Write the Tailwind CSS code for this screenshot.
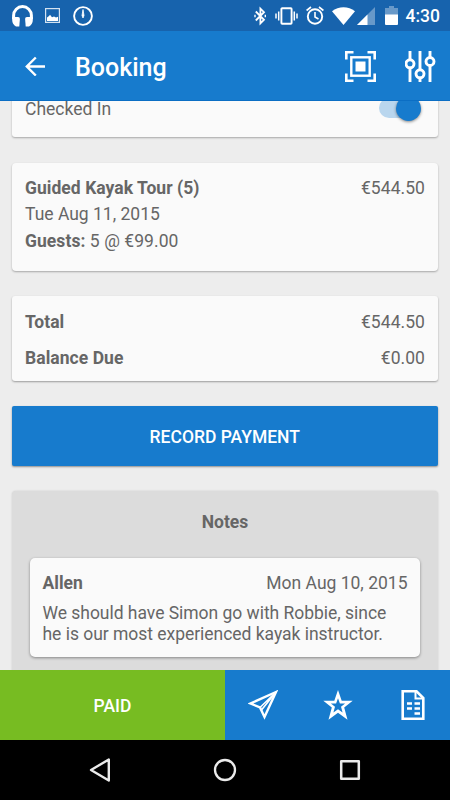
<!DOCTYPE html>
<html lang="en">
<head>
    <meta charset="UTF-8">
    <meta name="viewport" content="width=device-width, initial-scale=1.0">
    <title>Booking</title>
    <script src="https://cdn.jsdelivr.net/npm/@tailwindcss/browser@4"></script>
</head>
<body class="bg-[#ededed] font-['Roboto',sans-serif] text-[17.5px] text-[#666666]">
    <div class="w-[450px] h-[800px] flex flex-col overflow-hidden">

        <!-- Status bar -->
        <div class="h-[31px] shrink-0 bg-[#1763ad] flex items-center text-white pl-3 pr-[10px]">
            <svg class="w-[22px] h-[22px]" viewBox="0 0 22 22" fill="currentColor">
                <path d="M1.600 14V10.500a8.900 8.900 0 0 1 17.800 0V14" fill="none" stroke="currentColor" stroke-width="3"/>
                <path d="M.2 12h5.800q2 0 1.900 2l-.6 7.500H4Q.2 19 .2 15z"/>
                <path d="M20.800 12h-5.800q-2 0-1.900 2l.6 7.500H17q3.800-2.500 3.800-6.500z"/>
            </svg>
            <svg class="w-[15px] h-[15px] ml-[11px]" viewBox="0 0 15 15">
                <rect x=".6" y=".6" width="13.800" height="13.800" fill="none" stroke="#d3e2f1" stroke-width="1.200"/>
                <path d="M2 13V9.500l2-1.500 1-1.200 2 2.400 2-.8 2 1 2-.6V13z" fill="currentColor"/>
            </svg>
            <svg class="w-[20px] h-[20px] ml-[12.5px]" viewBox="0 0 20 20">
                <circle cx="10" cy="10" r="8.900" fill="none" stroke="currentColor" stroke-width="1.900"/>
                <path d="M10 3.500l1 6L10 12 9 9.500z" fill="currentColor" stroke="currentColor" stroke-width=".8"/>
            </svg>

            <div class="ml-auto flex items-center">
                <svg class="w-[13px] h-[20px]" viewBox="0 0 13 20" fill="none" stroke="currentColor" stroke-width="1.800">
                    <path d="M1.800 5.500l8.200 8.300-3.600 3.600V2.600L10 6.200l-8.200 8.300"/>
                    <path d="M11.300 8.800v2.400M1 8.800v2.400" stroke-width="1.400"/>
                </svg>
                <svg class="w-[23px] h-[18px] ml-[8px]" viewBox="0 0 23 18" fill="none" stroke="currentColor" stroke-width="1.900">
                    <rect x="6.400" y="1.200" width="10.200" height="15.600" rx=".8"/>
                    <path d="M3.700 4.500v9M19.300 4.500v9M1 6.500v5M22 6.500v5" stroke-width="1.500"/>
                </svg>
                <svg class="w-[18px] h-[19px] ml-[8px]" viewBox="0 0 18 19" fill="none" stroke="currentColor" stroke-width="1.900">
                    <circle cx="9" cy="10.500" r="7.200"/>
                    <path d="M9 6v5l3.500 2M.6 4.500L5 1M17.400 4.500L13 1" stroke-width="1.600"/>
                </svg>
                <svg class="w-[23px] h-[18px] ml-[8px]" viewBox="0 0 23 18" fill="currentColor">
                    <path d="M11.500 18L0 4.200C6.500-1.200 16.500-1.200 23 4.200z"/>
                </svg>
                <svg class="w-[18px] h-[18px] ml-[2px]" viewBox="0 0 18 18" fill="currentColor">
                    <path d="M18 0v18H0z" fill-opacity=".35"/>
                    <path d="M10.500 7.500V18H0z"/>
                </svg>
                <svg class="w-[13px] h-[19px] ml-[10px]" viewBox="0 0 13 19" fill="currentColor">
                    <path d="M4 0h5v2h4v7H0V2h4z" fill-opacity=".35"/>
                    <path d="M0 8.500h13V18q0 1-1 1H1q-1 0-1-1z"/>
                </svg>
                <span class="ml-[8px] pt-[2px] text-[17.5px] leading-[29px] font-medium">4:30</span>
            </div>
        </div>

        <!-- App bar -->
        <header class="h-[70px] shrink-0 bg-[#177bcd] border-b border-[#0b6ec4] flex items-center text-white pl-[25px] pr-[14px]">
            <svg class="w-[20px] h-[20px]" viewBox="0 0 20 20" fill="none" stroke="currentColor" stroke-width="2.400">
                <path d="M20 10.500H2M10.800 1.500L1.800 10.500l9 9"/>
            </svg>
            <h1 class="ml-[30px] mt-[4px] text-[25px] font-medium">Booking</h1>
            <svg class="w-[31px] h-[31px] ml-auto mt-px" viewBox="0 0 31 31" fill="none" stroke="currentColor">
                <path d="M1.300 8.500V1.300H8.500M22.500 1.300h7.200V8.500M29.700 22.500v7.200H22.500M8.500 29.700H1.300V22.500" stroke-width="2.600"/>
                <rect x="6.300" y="6.300" width="18.400" height="18.400" stroke-width="2.400"/>
                <rect x="10.500" y="10.500" width="10" height="10" fill="currentColor" stroke="none"/>
            </svg>
            <svg class="w-[31px] h-[31px] ml-[29px] mt-px" viewBox="0 0 31 31" fill="none" stroke="currentColor" stroke-width="2.900">
                <path d="M5 0v8.500M5 17v14M15 0v18.500M15 27v4M25 0v6.500M25 15v16"/>
                <circle cx="5" cy="12.800" r="4"/>
                <circle cx="15" cy="22.800" r="4"/>
                <circle cx="25" cy="10.500" r="4"/>
            </svg>
        </header>

        <!-- Scrolled content -->
        <main class="flex-1 min-h-0 overflow-hidden pl-3 pr-[12.5px] flex flex-col">
            <div class="-mt-[24px] h-[60px] shrink-0 rounded-[3px] bg-[#fafafa] shadow-[0_1px_2px_rgba(0,0,0,0.3)] pl-[13px] pr-[12.5px] pt-[20px] flex justify-between">
                <span class="leading-6">Checked In</span>
                <span class="mt-px mr-[4px] w-[42px] h-[20px] rounded-full bg-[#b9d6ee] flex items-center justify-end">
                    <span class="size-[25px] shrink-0 rounded-full bg-[#177bcd] shadow-[0_1px_3px_rgba(0,0,0,0.45)]"></span>
                </span>
            </div>

            <div class="mt-[26px] h-[108px] shrink-0 rounded-[4px] bg-[#fafafa] shadow-[0_1px_2px_rgba(0,0,0,0.3)] pl-[13px] pr-[12.5px] pt-3 leading-[26.5px]">
                <div class="flex justify-between">
                    <span class="font-bold tracking-[0.04px]">Guided Kayak Tour (5)</span>
                    <span class="tracking-[0.06px]">€544.50</span>
                </div>
                <p class="-mt-px">Tue Aug 11, 2015</p>
                <p class="mt-px tracking-[0.06px]"><b class="font-bold">Guests:</b> 5 @ €99.00</p>
            </div>

            <div class="mt-[25px] h-[85px] shrink-0 rounded-[3px] bg-[#fafafa] shadow-[0_1px_2px_rgba(0,0,0,0.35)] pl-[13px] pr-[12.5px] pt-2 leading-9">
                <div class="flex justify-between">
                    <span class="font-bold">Total</span>
                    <span class="tracking-[0.06px]">€544.50</span>
                </div>
                <div class="flex justify-between">
                    <span class="font-bold tracking-[0.05px]">Balance Due</span>
                    <span class="tracking-[0.06px]">€0.00</span>
                </div>
            </div>

            <button class="mt-[25px] h-[60px] shrink-0 rounded-[2px] bg-[#177bcd] text-white font-medium pt-[2px] shadow-[0_1px_2px_rgba(0,0,0,0.4)]">RECORD PAYMENT</button>

            <div class="mt-[25px] h-[220px] shrink-0 rounded-[4px] bg-[#dcdcdc] shadow-[0_0_2px_rgba(0,0,0,0.15)] pl-[18px] pr-[17.5px] pt-[19px]">
                <h2 class="text-center font-bold leading-6">Notes</h2>
                <div class="mt-6 h-[99px] rounded-[5px] bg-[#fafafa] shadow-[0_1px_3px_rgba(0,0,0,0.4)] px-[12.5px] pt-[13px]">
                    <div class="flex justify-between leading-6">
                        <span class="font-bold">Allen</span>
                        <span>Mon Aug 10, 2015</span>
                    </div>
                    <p class="mt-2 leading-[20.5px] tracking-[-0.03px]">We should have Simon go with Robbie, since<br>he is our most experienced kayak instructor.</p>
                </div>
            </div>
        </main>

        <!-- Actions -->
        <div class="h-[70px] shrink-0 grid grid-cols-2 text-white">
            <div class="bg-[#77bc22] flex items-center justify-center font-medium pt-[2px]">PAID</div>
            <div class="bg-[#177bcd] grid grid-cols-3 place-items-center">
                <svg class="w-[30px] h-[30px]" viewBox="0 0 30 30" fill="none" stroke="currentColor" stroke-width="2.400">
                    <path d="M28 2L2.500 13.500l9.500 4L16.500 27z"/>
                    <path d="M28 2L12 17.500M28 2L13.500 20" stroke-width="1.600"/>
                </svg>
                <svg class="w-[30px] h-[30px]" viewBox="0 0 30 30" fill="currentColor" fill-rule="evenodd">
                    <path d="M15 0l3.700 10.700H29.700L21.200 17.600 24.500 29.800 15 22.800 5.500 29.800 8.800 17.600.3 10.700H11.300zM15 8.200l-1.900 5.300H7.900l4.100 3.300-1.600 5.800 4.600-3.300 4.600 3.300-1.600-5.800 4.100-3.300h-5.200z"/>
                </svg>
                <svg class="w-[24px] h-[30px]" viewBox="0 0 24 30" fill="none" stroke="currentColor" stroke-width="2.600">
                    <path d="M1.700 1.300H15.500L22.300 8v20.700H1.700z"/>
                    <path d="M14.500 1.500V8.500H22" stroke-width="2"/>
                    <path d="M6 13.500h5M13.500 13.500h5.500M6 18.500h5M13.500 18.500h5.500M13.500 23.500h5.500"/>
                </svg>
            </div>
        </div>

        <!-- System navigation -->
        <nav class="h-[60px] shrink-0 bg-black text-[#ebebeb] flex items-center justify-between px-[89px]">
            <svg class="w-[22px] h-[24px]" viewBox="0 0 22 24" fill="none" stroke="currentColor" stroke-width="2.400" stroke-linejoin="round">
                <path d="M19.800 1.500v21L2 12z"/>
            </svg>
            <svg class="w-[24px] h-[24px]" viewBox="0 0 24 24" fill="none" stroke="currentColor" stroke-width="2.300">
                <circle cx="12" cy="12" r="10"/>
            </svg>
            <svg class="w-[22px] h-[22px]" viewBox="0 0 22 22" fill="none" stroke="currentColor" stroke-width="2.500" stroke-linejoin="round">
                <rect x="2.200" y="2.200" width="17.600" height="17.600"/>
            </svg>
        </nav>
    </div>
</body>
</html>
